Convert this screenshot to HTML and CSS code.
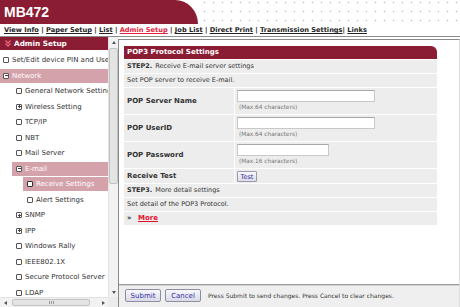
FILE: index.html
```html
<!DOCTYPE html>
<html>
<head>
<meta charset="utf-8">
<title>MB472</title>
<link rel="stylesheet" href="styles.css">
</head>
<body>
<header class="top">
  <div class="brand">MB472</div>
  <div class="dots"></div>
</header>
<nav class="nav"><a>View Info</a> | <a>Paper Setup</a> | <a>List</a> | <a class="cur">Admin Setup</a> | <a>Job List</a> | <a>Direct Print</a> | <a>Transmission Settings</a>| <a>Links</a></nav>
<div class="page">
  <aside class="side">
    <div class="tree">
      <div class="tree-head"><svg class="chev" viewBox="0 0 6 7" width="6" height="7"><path d="M0.5 0.5 L3 3 L5.5 0.5 M0.5 3.5 L3 6 L5.5 3.5" fill="none" stroke="#e8667c" stroke-width="1.3"/></svg>Admin Setup</div>
      <div class="item l0"><i class="ico"></i>Set/Edit device PIN and User Authentication</div>
      <div class="item l0 open"><i class="ico minus"></i>Network</div>
      <div class="item l1"><i class="ico"></i>General Network Settings</div>
      <div class="item l1"><i class="ico plus"></i>Wireless Setting</div>
      <div class="item l1"><i class="ico"></i>TCP/IP</div>
      <div class="item l1"><i class="ico"></i>NBT</div>
      <div class="item l1"><i class="ico"></i>Mail Server</div>
      <div class="item l1 open"><i class="ico minus"></i>E-mail</div>
      <div class="item l2 sel"><i class="ico"></i>Receive Settings</div>
      <div class="item l2"><i class="ico"></i>Alert Settings</div>
      <div class="item l1"><i class="ico plus"></i>SNMP</div>
      <div class="item l1"><i class="ico plus"></i>IPP</div>
      <div class="item l1"><i class="ico"></i>Windows Rally</div>
      <div class="item l1"><i class="ico"></i>IEEE802.1X</div>
      <div class="item l1"><i class="ico"></i>Secure Protocol Server</div>
      <div class="item l1"><i class="ico"></i>LDAP</div>
    </div>
    <div class="vscroll">
      <div class="arrow"><i class="tri up"></i></div>
      <div class="vthumb"></div>
      <div class="track"></div>
      <div class="arrow"><i class="tri down"></i></div>
    </div>
    <div class="hscroll">
      <div class="arrow"><i class="tri left"></i></div>
      <div class="hthumb"><i class="grip"></i></div>
      <div class="track"></div>
      <div class="arrow"><i class="tri right"></i></div>
    </div>
    <div class="corner"></div>
  </aside>
  <main class="main">
    <div class="content">
      <section class="panel">
        <div class="panel-title">POP3 Protocol Settings</div>
        <div class="grid">
          <div class="row full"><b class="step">STEP2.</b><span>Receive E-mail server settings</span></div>
          <div class="row full">Set POP server to receive E-mail.</div>
          <div class="label">POP Server Name</div>
          <div class="value"><span class="input wide"></span><div class="note">(Max.64 characters)</div></div>
          <div class="label">POP UserID</div>
          <div class="value"><span class="input wide"></span><div class="note">(Max.64 characters)</div></div>
          <div class="label">POP Password</div>
          <div class="value"><span class="input short"></span><div class="note">(Max.16 characters)</div></div>
          <div class="label short-row">Receive Test</div>
          <div class="value short-row"><span class="test">Test</span></div>
          <div class="row full"><b class="step">STEP3.</b><span>More detail settings</span></div>
          <div class="row full">Set detail of the POP3 Protocol.</div>
          <div class="row full more-row"><span class="raquo">&raquo;</span><a class="more">More</a></div>
        </div>
      </section>
    </div>
    <footer class="actions">
      <span class="btn">Submit</span>
      <span class="btn">Cancel</span>
      <span class="hint">Press Submit to send changes. Press Cancel to clear changes.</span>
    </footer>
  </main>
</div>
</body>
</html>
```
FILE: styles.css
```css
* { box-sizing: border-box; margin: 0; padding: 0; }
html, body { width: 460px; height: 307px; overflow: hidden; }
body { font-family: "DejaVu Sans", Verdana, sans-serif; color: #333; background: #fff; }

.top { display: flex; height: 24px; }
.brand {
  width: 198px; background: #8a1c34; border-top-right-radius: 23px 24px;
  color: #fff; font: bold 14px/14px "Liberation Sans", Arial, sans-serif;
  padding: 5px 0 0 4px;
}
.dots {
  flex: 1;
  background-image: radial-gradient(circle, #c4c4c4 0 0.7px, transparent 1.1px);
  background-size: 9px 9px; background-position: 2px -2px;
}

.nav {
  height: 13px; padding-left: 4px; white-space: nowrap;
  font: bold 6.65px/12px "DejaVu Sans", Verdana, sans-serif; color: #222;
  border-bottom: 1px solid #8c8c8c;
}
.nav a { color: #222; text-decoration: underline; }
.nav a.cur { color: #e4223e; }

.page { display: flex; height: 270px; }

.side {
  width: 118px; flex: none; display: grid;
  grid-template-columns: 108px 10px; grid-template-rows: 260px 10px;
}
.tree { overflow: hidden; white-space: nowrap; }
.tree-head {
  height: 13px; margin-bottom: 3px; background: #8a1c34; color: #fff;
  font: bold 7.3px/13px "DejaVu Sans", Verdana, sans-serif;
  padding-left: 5px; display: flex; align-items: center;
}
.chev { margin-right: 3px; }
.item {
  height: 14px; margin-bottom: 1.5px; display: flex; align-items: center;
  font-size: 7px; color: #333;
}
.item.l0 { padding-left: 3px; }
.item.l1 { margin-left: 12px; padding-left: 4px; }
.item.l2 { margin-left: 23px; padding-left: 4px; }
.item.open, .item.sel { background: #d4a2ab; color: #fff; }
.ico {
  width: 6px; height: 6px; flex: none; margin-right: 3px;
  border: 1px solid #555; border-radius: 1px; background: #fff; position: relative;
}
.ico.minus::before, .ico.plus::before {
  content: ""; position: absolute; left: 0.5px; right: 0.5px; top: 1.5px; height: 1px; background: #444;
}
.ico.plus::after {
  content: ""; position: absolute; top: 0.5px; bottom: 0.5px; left: 1.5px; width: 1px; background: #444;
}
.item.sel .ico { background: #fff; border: 1.5px solid #333; }

.vscroll { display: flex; flex-direction: column; background: #f2f2f2; border-left: 1px solid #e2e2e2; }
.hscroll { display: flex; background: #f2f2f2; border-top: 1px solid #e2e2e2; }
.corner { background: #ececec; }
.arrow { width: 9px; height: 10px; flex: none; display: flex; align-items: center; justify-content: center; }
.hscroll .arrow { width: 10px; height: 9px; }
.track { flex: 1; }
.tri { width: 0; height: 0; border: 2px solid transparent; }
.tri.up { border-bottom: 3px solid #555; border-top: 0; }
.tri.down { border-top: 3px solid #555; border-bottom: 0; }
.tri.left { border-right: 3px solid #555; border-left: 0; }
.tri.right { border-left: 3px solid #555; border-right: 0; }
.vthumb { height: 136px; margin: 1px 0 0 0; background: #e4e4e4; border: 1px solid #c2c2c2; border-radius: 2px; }
.hthumb {
  width: 78px; margin: 1px 0 0 2px; height: 7px; background: #e4e4e4;
  border: 1px solid #c2c2c2; border-radius: 2px; display: flex; justify-content: center; align-items: center;
}
.grip { width: 5px; height: 3px; border-left: 1px solid #999; border-right: 1px solid #999; background: linear-gradient(90deg, transparent 1px, #999 1px, #999 2px, transparent 2px); }

.main {
  flex: 1; margin-top: 2px; display: flex; flex-direction: column;
  border-left: 1px solid #8a8a8a; border-top: 1px solid #8a8a8a; border-right: 1px solid #dcdcdc;
}
.content { flex: 1; padding: 6px 0 0 5px; }
.panel { width: 313px; }
.panel-title {
  height: 13px; background: #8a1c34; color: #fff; border-top-right-radius: 6px;
  font: bold 7px/13px "DejaVu Sans", Verdana, sans-serif; padding-left: 3px;
}
.grid {
  display: grid; grid-template-columns: 110px 202px; gap: 1px;
  background: #fff; padding-top: 1px; font-size: 6.5px;
}
.grid > div { background: #ededed; }
.row { grid-column: 1 / 3; height: 13px; line-height: 13px; padding-left: 3px; color: #333; white-space: nowrap; }
.step { margin-right: 3px; }
.label {
  display: flex; align-items: center; padding-left: 3px;
  font: bold 7px "DejaVu Sans", Verdana, sans-serif; color: #333;
}
.value { padding: 2px 2px 1px 2px; height: 26px; }
.input { display: block; height: 12px; background: #fff; border: 1px solid #c8c8c8; border-top-color: #a8a8a8; }
.input.wide { width: 138px; }
.input.short { width: 92px; }
.note { font-size: 5.8px; line-height: 11px; color: #777; padding-left: 2px; }
.short-row { height: 14px; }
.value.short-row { padding: 2px 2px 0 2px; }
.test {
  display: inline-flex; align-items: center; justify-content: center;
  width: 20px; height: 11px; border: 1px solid #9a9aaa; border-radius: 1px;
  background: linear-gradient(#f8f8fc, #dcdcea); color: #2c2c9c; font-size: 6.5px;
}
.more-row { display: flex; align-items: center; }
.raquo { font-weight: bold; color: #333; font-size: 7px; width: 11px; }
.more { color: #e4102c; font-weight: bold; text-decoration: underline; font-size: 7px; }

.actions {
  height: 23px; flex: none; display: flex; align-items: flex-start; padding: 4px 0 0 6px;
  background: #efefef; border-top: 1px solid #9a9a9a; box-shadow: inset 0 1px #d4d4d4;
}
.btn {
  width: 36px; height: 13px; margin-right: 4px; display: flex; align-items: center; justify-content: center;
  border: 1px solid #8e8e9e; border-radius: 2px; background: linear-gradient(#f8f8fd, #d9d9e8);
  color: #32329e; font-size: 7px;
}
.hint { font-size: 6px; line-height: 13px; color: #333; margin-left: 3px; }
```
